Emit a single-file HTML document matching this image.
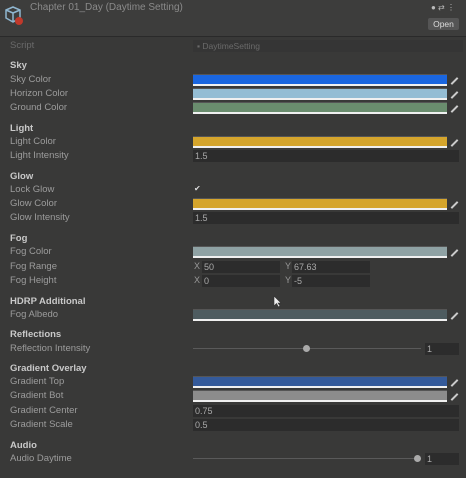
<!DOCTYPE html><html><head><style>
body{margin:0;width:466px;height:478px;background:#393938;font-family:"Liberation Sans",sans-serif;position:relative;overflow:hidden}
.a{position:absolute}
.l{position:absolute;left:10px;font-size:9.5px;color:#9c9c9c;line-height:12px}
.h{position:absolute;left:10px;font-size:9.5px;color:#c9c9c9;font-weight:bold;line-height:12px}
.c{position:absolute;left:193px;width:254px;height:12px;border-bottom:2px solid #f0f0f0;box-sizing:border-box;border-top:1px solid #555}
.f{position:absolute;left:193px;width:266px;height:12px;background:#2c2c2c;font-size:9px;color:#aaa;line-height:12px;padding-left:2px;box-sizing:border-box}
.e{position:absolute;left:450px;width:9px;height:2px;background:#ccc;transform:rotate(-45deg)}
</style></head><body>
<div class="a" style="left:0;top:0;width:466px;height:36px;background:#3d3d3c;border-bottom:1px solid #2a2a2a"></div>
<svg class="a" style="left:3px;top:4px" width="22" height="22" viewBox="0 0 22 22"><path d="M3 6 L10 3 L17 6 L17 14 L10 18 L3 14 Z M3 6 L10 9 L17 6 M10 9 L10 18" fill="none" stroke="#8fb6d0" stroke-width="1.5"/><circle cx="16" cy="17" r="4" fill="#c0392b"/></svg>
<div class="a" style="left:30px;top:2px;font-size:10px;color:#8a8a8a">Chapter 01_Day (Daytime Setting)</div>
<div class="a" style="left:431px;top:3px;font-size:8px;color:#bbb">● ⇄ ⋮</div>
<div class="a" style="left:428px;top:18px;width:31px;height:12px;background:#555;color:#ddd;font-size:8.5px;text-align:center;line-height:12px;border-radius:2px">Open</div>
<div class="l" style="top:40px;color:#6a6a6a">Script</div>
<div class="a" style="left:193px;top:40px;width:266px;height:12px;background:#353535;font-size:8.5px;color:#6a6a6a;line-height:12px;padding-left:4px">▪ DaytimeSetting</div>
<div class="h" style="top:60px">Sky</div>
<div class="l" style="top:74px">Sky Color</div><div class="c" style="top:74px;background:#1a66e0"></div><div class="e" style="top:80px"></div>
<div class="l" style="top:88px">Horizon Color</div><div class="c" style="top:88px;background:#94bdd4"></div><div class="e" style="top:94px"></div>
<div class="l" style="top:102px">Ground Color</div><div class="c" style="top:102px;background:#6a8d6e"></div><div class="e" style="top:108px"></div>
<div class="h" style="top:123px">Light</div>
<div class="l" style="top:136px">Light Color</div><div class="c" style="top:136px;background:#d5a52c"></div><div class="e" style="top:142px"></div>
<div class="l" style="top:150px">Light Intensity</div><div class="f" style="top:150px">1.5</div>
<div class="h" style="top:171px">Glow</div>
<div class="l" style="top:184px">Lock Glow</div><div class="a" style="left:194px;top:184px;font-size:8px;color:#ddd">✔</div>
<div class="l" style="top:198px">Glow Color</div><div class="c" style="top:198px;background:#d5a52c"></div><div class="e" style="top:204px"></div>
<div class="l" style="top:212px">Glow Intensity</div><div class="f" style="top:212px">1.5</div>
<div class="h" style="top:233px">Fog</div>
<div class="l" style="top:246px">Fog Color</div><div class="c" style="top:246px;background:#8fa2a4"></div><div class="e" style="top:252px"></div>
<div class="l" style="top:261px">Fog Range</div>
<div class="a" style="left:194px;top:261px;font-size:9px;color:#999">X</div><div class="f" style="left:202px;width:78px;top:261px">50</div>
<div class="a" style="left:285px;top:261px;font-size:9px;color:#999">Y</div><div class="f" style="left:292px;width:78px;top:261px">67.63</div>
<div class="l" style="top:275px">Fog Height</div>
<div class="a" style="left:194px;top:275px;font-size:9px;color:#999">X</div><div class="f" style="left:202px;width:78px;top:275px">0</div>
<div class="a" style="left:285px;top:275px;font-size:9px;color:#999">Y</div><div class="f" style="left:292px;width:78px;top:275px">-5</div>
<div class="h" style="top:296px">HDRP Additional</div>
<svg class="a" style="left:273px;top:295px" width="9" height="13" viewBox="0 0 9 13"><path d="M1 1 L1 11 L3.5 8.5 L5.5 12 L7 11 L5 8 L8 8 Z" fill="#eee" stroke="#333" stroke-width="0.6"/></svg>
<div class="l" style="top:309px">Fog Albedo</div><div class="c" style="top:309px;background:#4e5c60"></div><div class="e" style="top:315px"></div>
<div class="h" style="top:329px">Reflections</div>
<div class="l" style="top:343px">Reflection Intensity</div>
<div class="a" style="left:193px;top:348px;width:228px;height:1px;background:#5a5a5a"></div>
<div class="a" style="left:303px;top:345px;width:7px;height:7px;border-radius:50%;background:#aaa"></div>
<div class="f" style="left:425px;width:34px;top:343px">1</div>
<div class="h" style="top:363px">Gradient Overlay</div>
<div class="l" style="top:376px">Gradient Top</div><div class="c" style="top:376px;background:#345a9a"></div><div class="e" style="top:382px"></div>
<div class="l" style="top:390px">Gradient Bot</div><div class="c" style="top:390px;background:#8c8c8c"></div><div class="e" style="top:396px"></div>
<div class="l" style="top:405px">Gradient Center</div><div class="f" style="top:405px">0.75</div>
<div class="l" style="top:419px">Gradient Scale</div><div class="f" style="top:419px">0.5</div>
<div class="h" style="top:440px">Audio</div>
<div class="l" style="top:453px">Audio Daytime</div>
<div class="a" style="left:193px;top:458px;width:228px;height:1px;background:#5a5a5a"></div>
<div class="a" style="left:414px;top:455px;width:7px;height:7px;border-radius:50%;background:#aaa"></div>
<div class="f" style="left:425px;width:34px;top:453px">1</div>
</body></html>
